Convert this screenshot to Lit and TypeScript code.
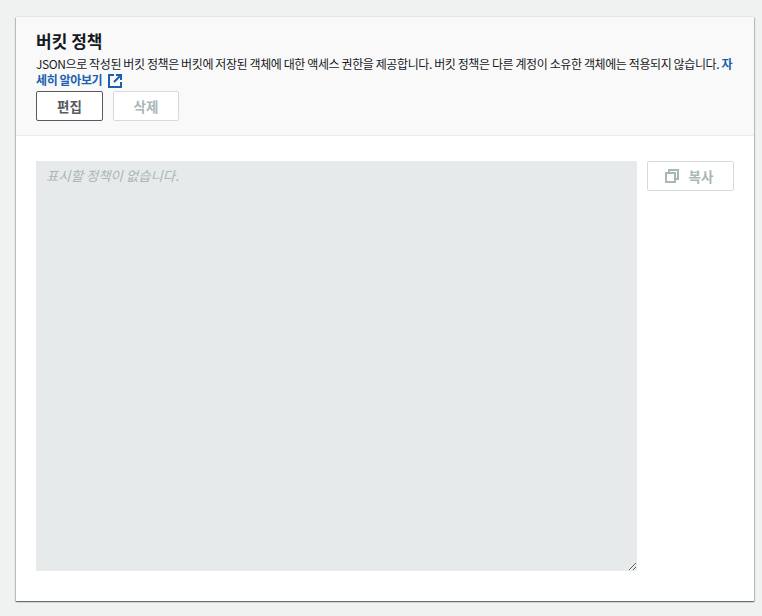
import { LitElement, html, css } from "lit";
import { customElement } from "lit/decorators.js";

@customElement("app-root")
export class AppRoot extends LitElement {
  static styles = css`
    :host {
      display: block;
      box-sizing: border-box;
      height: 616px;
      background: #f0f1f1;
      padding: 17px 8px 15px 16px;
      font-family: "Noto Sans CJK KR", "Noto Sans", sans-serif;
      color: #16191f;
    }
    .card {
      height: 584px;
      box-sizing: border-box;
      background: #fff;
      box-shadow: 0 1px 1px 0 rgba(0, 28, 36, 0.4), 1px 1px 1px 0 rgba(0, 28, 36, 0.18), -1px 1px 1px 0 rgba(0, 28, 36, 0.18), 0 -1px 1px 0 rgba(0, 28, 36, 0.05);
      display: flex;
      flex-direction: column;
    }
    .header {
      background: #f9f9f9;
      border-bottom: 1px solid #eaeded;
      padding: 12px 20px 14px;
      height: 119px;
      box-sizing: border-box;
    }
    h2 {
      margin: 0;
      font-size: 17px;
      font-weight: 700;
      line-height: 24px;
    }
    p {
      margin: 3px 0 0;
      font-size: 12px;
      line-height: 16px;
      letter-spacing: -0.4px;
      word-break: break-all;
      color: #16191f;
    }
    a {
      color: #1b5fae;
      font-weight: 700;
      text-decoration: none;
    }
    .ext {
      display: inline-block;
      width: 14px;
      height: 14px;
      vertical-align: -3px;
      margin-left: 6px;
    }
    .actions {
      display: flex;
      gap: 10px;
      margin-top: 3px;
    }
    button {
      font-family: inherit;
      font-size: 13.5px;
      font-weight: 700;
      box-sizing: border-box;
      height: 30px;
      border-radius: 2px;
      background: #fff;
      padding: 0;
      display: flex;
      align-items: center;
      justify-content: center;
    }
    .edit {
      width: 67px;
      border: 1px solid #545b64;
      color: #545b64;
    }
    .del {
      width: 66px;
      border: 1px solid #d5dbdb;
      color: #aab7b8;
    }
    .body {
      flex: 1;
      display: flex;
      gap: 10px;
      padding: 25px 20px 30px;
      align-items: flex-start;
    }
    textarea {
      width: 601px;
      height: 410px;
      box-sizing: border-box;
      background: #e6eaea;
      border: none;
      margin: 0;
      padding: 6px 10px;
      font-family: inherit;
      font-size: 13.4px;
      line-height: 16px;
      resize: vertical;
      outline: none;
      display: block;
    }
    textarea::placeholder {
      color: #aab7b8;
      font-style: italic;
      opacity: 1;
    }
    .copy {
      width: 87px;
      border: 1px solid #d5dbdb;
      color: #aab7b8;
      gap: 10px;
      padding-right: 3px;
    }
    .copy svg {
      width: 14px;
      height: 14px;
      display: block;
    }
  `;

  render() {
    return html`
      <div class="card">
        <div class="header">
          <h2>버킷 정책</h2>
          <p>JSON으로 작성된 버킷 정책은 버킷에 저장된 객체에 대한 액세스 권한을 제공합니다. 버킷 정책은 다른 계정이 소유한 객체에는 적용되지 않습니다. <a href="#">자세히 알아보기<svg class="ext" viewBox="0 0 14 14" fill="none" stroke="#1b5fae" stroke-width="2"><path d="M6 1H1v12h12V8"/><path d="M8 1h5v5M13 1 6 8"/></svg></a></p>
          <div class="actions">
            <button class="edit">편집</button>
            <button class="del" disabled>삭제</button>
          </div>
        </div>
        <div class="body">
          <textarea disabled placeholder="표시할 정책이 없습니다."></textarea>
          <button class="copy" disabled>
            <svg viewBox="0 0 14 14" fill="none" stroke="#aab7b8" stroke-width="2"><rect x="1" y="4" width="9" height="9"/><path d="M4 3V1h9v9h-2"/></svg>
            복사
          </button>
        </div>
      </div>
    `;
  }
}
